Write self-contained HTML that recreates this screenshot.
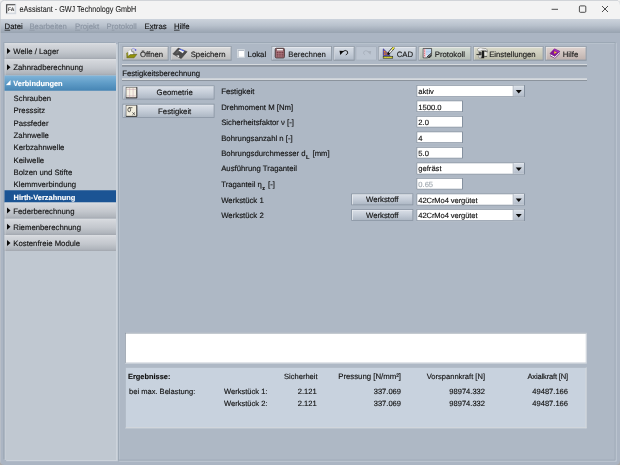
<!DOCTYPE html>
<html><head><meta charset="utf-8">
<style>
*{margin:0;padding:0;box-sizing:border-box}
html,body{width:620px;height:465px;overflow:hidden;background:linear-gradient(#f0f0f0 0,#f0f0f0 50%,#ababab 50%,#ababab 100%)}
body{font-family:"Liberation Sans",sans-serif;font-size:7.75px;color:#111;position:relative;-webkit-text-stroke:0.13px}
.abs{position:absolute}
#wrap{position:absolute;left:0;top:0;width:2480px;height:1860px;transform:scale(0.25);transform-origin:0 0}
#win{zoom:4;filter:contrast(1);text-rendering:geometricPrecision;position:absolute;left:0;top:0;width:620px;height:465px;border-radius:4.5px;overflow:hidden;background:#abb5c3}
#win:after{content:'';position:absolute;left:0;top:0;width:620px;height:465px;border-radius:4.5px;border:0.8px solid #bfc3c9;pointer-events:none}
#title{position:absolute;left:0;top:0;width:620px;height:19px;background:#f3f3f3}
#title .t{position:absolute;left:19.5px;top:4.5px;font-size:8.6px;color:#1c1c1c;white-space:nowrap;transform-origin:0 0;transform:scaleX(0.838);-webkit-text-stroke:0.08px}
#menu{position:absolute;left:0;top:19px;width:620px;height:14px;background:linear-gradient(#ccd3dc,#b9c2cd 45%,#a3adba 80%,#98a3b0 100%)}
#menu span{position:absolute;top:3.2px;white-space:nowrap;color:#111}
#menu span.dis{color:#8a94a2}
#menu u{text-decoration-thickness:0.7px;text-underline-offset:0.6px}
/* sidebar */
#side{position:absolute;left:4.6px;top:42.9px;width:111.3px;height:417px;background:#c0c8d1;box-shadow:-1.1px -0.7px 0 0 #98a4b2, 1.7px 1.2px 0 0 #ccd3db, inset 1.1px 0 0 #cad1d9}
.hd{position:absolute;left:0;width:111.3px;height:16.2px;background:linear-gradient(#dcdfe3 0,#d3d6db 12%,#c3c7cd 55%,#b0b5bc 88%,#a2a7af 100%);box-shadow:inset 0.8px 0 0 #d9dde1;color:#111}
.hd span{position:absolute;left:8.7px;top:3.7px;white-space:nowrap}
.hd i{position:absolute;left:2.5px;top:5.1px;width:0;height:0;border-left:3.6px solid #0a0a0a;border-top:3px solid transparent;border-bottom:3px solid transparent}
.hd.sel{background:linear-gradient(#7fb4d9,#5f9cc7 50%,#4685b4 100%);color:#fff;font-weight:bold;font-size:7.4px;box-shadow:none}
.it{position:absolute;left:0;width:111.3px;height:12.35px;white-space:nowrap}
.it span{position:absolute;left:9px;top:2.3px}
.it.sel{background:#1b5494;color:#fff;font-weight:bold;font-size:7.4px}
.it.sel span{top:3px}
/* main panel */
#main{position:absolute;left:118.1px;top:42.1px;width:497.4px;height:418.4px;background:#aeb8c5;border:0.75px solid #97a3b0;box-shadow:inset 0.9px 0.9px 0 #bcc5d0, 1.1px 1.1px 0 #c4ccd7}
.btn{position:absolute;height:14.3px;top:46.2px;background:linear-gradient(#dcdcdc,#cecece 50%,#bcbcbc 100%);border:0.75px solid #97a0aa;border-bottom-color:#7f8893;border-right-color:#8a939e;box-shadow:inset 0.7px 0.7px 0 #ebebeb;white-space:nowrap}
.btn.bl{background:linear-gradient(#d6dce4,#c5cdd8 50%,#b1bbc8 100%);box-shadow:inset 0.7px 0.7px 0 #e8ecf1}
.btn span{position:absolute;top:3px;color:#1a1a1a}
.sep{position:absolute;left:122.1px;width:465px;height:2.7px;background:linear-gradient(#d6dade 0,#d6dade 50%,#8b939d 50%,#8b939d 100%)}
.lb{position:absolute;left:221.2px;white-space:nowrap;line-height:9px;height:9px}
.lb sub{font-size:5.6px;font-weight:bold;vertical-align:baseline;position:relative;top:2.7px;margin:0 0.9px 0 0.4px}
.tf{position:absolute;left:416.2px;width:46.7px;height:12px;background:#fff;border:1px solid #8591a0}
.tf span{position:absolute;left:1.1px;top:0.6px;white-space:nowrap;line-height:9px;font-size:7.6px}
.cb span{position:absolute;left:1.1px;top:0.8px;white-space:nowrap;line-height:9px;font-size:7.6px}
.cb{position:absolute;left:416.2px;width:108.9px;height:12.4px;background:#fff;border:1px solid #8591a0}
.cb b{position:absolute;right:0;top:0;width:11.3px;height:10.4px;background:linear-gradient(#d9dfe7,#c6ced9 50%,#b3bcc9);border-left:0.75px solid #97a2af;box-shadow:inset 0.6px 0.6px 0 #e6eaef}
.cb b:after{content:'';position:absolute;left:2.1px;top:4.1px;border-top:3.5px solid #0c0c0c;border-left:3px solid transparent;border-right:3px solid transparent}
.sb{position:absolute;height:11.7px;background:linear-gradient(#dbe0e8,#c5cdd8 50%,#adb7c4 100%);border:0.75px solid #8893a1;box-shadow:inset 0.7px 0.7px 0 #eceff3;text-align:center;white-space:nowrap;line-height:10.4px}
.r{position:absolute;white-space:nowrap;text-align:right;font-size:7.55px}
</style></head><body>
<div id="wrap"><div id="win">
<div id="title"><span class="t">eAssistant - GWJ Technology GmbH</span>
<svg class="abs" style="left:5.5px;top:3.6px" width="11" height="11" viewBox="0 0 11 11"><rect x="0.2" y="0.2" width="10.6" height="10.6" fill="#d3d9e1"/><rect x="1.2" y="1.2" width="8.6" height="8.6" fill="#f6f6f6"/><path d="M1.2 9.8V1.2H9.8" fill="none" stroke="#3a3a3a" stroke-width="1.1"/><path d="M1.6 9.6H9.6V1.8" fill="none" stroke="#c9ced6" stroke-width="0.7"/><text x="2.5" y="7.7" font-family="Liberation Sans,sans-serif" font-size="5" font-weight="bold" fill="#3a3a3a">FA</text></svg>
<svg class="abs" style="left:545px;top:0" width="70" height="19" viewBox="0 0 70 19"><g stroke="#222" stroke-width="0.8" fill="none"><path d="M6.6 9.3h6.4"/><rect x="34.4" y="5.9" width="6.4" height="6.4" rx="1"/><path d="M57 6l6 6M63 6l-6 6"/></g></svg>
</div>
<div id="menu"><span style="left:4.6px"><u>D</u>atei</span><span class="dis" style="left:29.4px"><u>B</u>earbeiten</span><span class="dis" style="left:75px"><u>P</u>rojekt</span><span class="dis" style="left:106.6px">P<u>r</u>otokoll</span><span style="left:144.6px">E<u>x</u>tras</span><span style="left:174px"><u>H</u>ilfe</span></div>

<div id="side">
<div class="hd" style="top:0"><i></i><span>Welle / Lager</span></div>
<div class="hd" style="top:16.2px"><i></i><span>Zahnradberechnung</span></div>
<div class="hd sel" style="top:32.5px;height:15.3px"><svg class="abs" style="left:1.1px;top:4.6px" width="5" height="5.4" viewBox="0 0 44 46"><path d="M0 46L44 46L44 0Z" fill="#fff"/></svg><span>Verbindungen</span></div>
<div class="it" style="top:48.60px"><span>Schrauben</span></div>
<div class="it" style="top:60.93px"><span>Presssitz</span></div>
<div class="it" style="top:73.26px"><span>Passfeder</span></div>
<div class="it" style="top:85.59px"><span>Zahnwelle</span></div>
<div class="it" style="top:97.92px"><span>Kerbzahnwelle</span></div>
<div class="it" style="top:110.25px"><span>Keilwelle</span></div>
<div class="it" style="top:122.58px"><span>Bolzen und Stifte</span></div>
<div class="it" style="top:134.91px"><span>Klemmverbindung</span></div>
<div class="it sel" style="top:147.24px"><span>Hirth-Verzahnung</span></div>
<div class="hd" style="top:159.6px"><i></i><span style="top:4.4px">Federberechnung</span></div>
<div class="hd" style="top:175.8px"><i></i><span>Riemenberechnung</span></div>
<div class="hd" style="top:192.0px"><i></i><span>Kostenfreie Module</span></div>
</div>

<div id="main"></div>
<!-- toolbar -->
<div class="btn" style="left:122.6px;width:45.8px"><span style="left:16.6px">Öffnen</span></div>
<div class="btn" style="left:170.4px;width:61.2px"><span style="left:19.5px">Speichern</span></div>
<div class="abs" style="left:237px;top:49.4px;width:7.8px;height:8.1px;background:#fff;border:0.9px solid #c3cbd4;box-shadow:inset 0.7px 0.7px 0 #939daa"></div>
<div class="abs" style="left:247.6px;top:49.5px">Lokal</div>
<div class="btn bl" style="left:271.4px;width:60.6px"><span style="left:16.2px">Berechnen</span></div>
<div class="btn bl" style="left:333.6px;width:21px"></div>
<div class="btn bl" style="left:355.6px;width:21.2px;background:#bcc5d1;box-shadow:none;border-color:#a2acb9"></div>
<div class="btn bl" style="left:378.4px;width:38px"><span style="left:17.6px">CAD</span></div>
<div class="btn" style="left:418.4px;width:52.8px;background:linear-gradient(#d4dcd4,#c4ccc4 50%,#b4bcb4)"><span style="left:15.6px">Protokoll</span></div>
<div class="btn" style="left:473px;width:70.6px;background:linear-gradient(#dcdccc,#ccccbc 50%,#bcbcaa)"><span style="left:15.4px">Einstellungen</span></div>
<div class="btn" style="left:545px;width:41.6px;background:linear-gradient(#e0d4d0,#d0c4c0 50%,#c0b2ae)"><span style="left:17px">Hilfe</span></div>


<div class="sep" style="top:64px"></div>
<div class="abs" style="left:122.2px;top:68.6px">Festigkeitsberechnung</div>
<div class="sep" style="top:78.2px"></div>

<div class="sb" style="left:122.5px;top:85.6px;width:92px;height:14px;line-height:13.2px;padding-left:12.4px">Geometrie</div>
<div class="sb" style="left:122.5px;top:103.8px;width:92px;height:14px;line-height:13.2px;padding-left:12.4px">Festigkeit</div>

<div class="lb" style="top:87.2px">Festigkeit</div>
<div class="lb" style="top:102.6px">Drehmoment M [Nm]</div>
<div class="lb" style="top:118px">Sicherheitsfaktor ν [-]</div>
<div class="lb" style="top:133.5px">Bohrungsanzahl n [-]</div>
<div class="lb" style="top:148.8px">Bohrungsdurchmesser d<sub>L</sub> [mm]</div>
<div class="lb" style="top:164.2px">Ausführung Traganteil</div>
<div class="lb" style="top:179.9px">Traganteil η<sub>z</sub> [-]</div>
<div class="lb" style="top:196px">Werkstück 1</div>
<div class="lb" style="top:210.8px">Werkstück 2</div>

<div class="cb" style="top:84.80px"><span>aktiv</span><b></b></div>
<div class="tf" style="top:100.30px"><span style="top:1.2px">1500.0</span></div>
<div class="tf" style="top:115.80px"><span>2.0</span></div>
<div class="tf" style="top:131.30px"><span style="top:1.2px">4</span></div>
<div class="tf" style="top:146.80px"><span>5.0</span></div>
<div class="cb" style="top:162.30px"><span>gefräst</span><b></b></div>
<div class="tf" style="top:177.80px"><span style="color:#a0a8b0">0.65</span></div>
<div class="sb" style="left:351.3px;top:193.50px;width:61.9px">Werkstoff</div>
<div class="cb" style="top:193.30px"><span style="letter-spacing:-0.1px;top:1.4px">42CrMo4 vergütet</span><b></b></div>
<div class="sb" style="left:351.3px;top:209.00px;width:61.9px">Werkstoff</div>
<div class="cb" style="top:208.80px"><span style="letter-spacing:-0.1px">42CrMo4 vergütet</span><b></b></div>

<!-- bottom -->
<div class="abs" style="left:124.95px;top:332.85px;width:461.6px;height:30.3px;background:#fff;border:0.75px solid #8a95a2;border-bottom-color:#c3cad3;border-right-color:#c3cad3;box-shadow:0.5px 0.5px 0 #bcc5cf"></div>
<div class="abs" style="left:125.3px;top:367.2px;width:461.3px;height:61.1px;background:#c8d2de;border-style:solid;border-width:0.9px 1.1px 1.1px 0.9px;border-color:#adb7c3 #d3d7db #d3d7db #adb7c3"></div>
<div class="abs" style="left:128px;top:372.2px;font-weight:bold;font-size:7.4px">Ergebnisse:</div>
<div class="abs" style="left:129px;top:387.2px;font-size:7.55px">bei max. Belastung:</div>
<div class="abs" style="left:224px;top:387.2px;font-size:7.55px">Werkstück 1:</div>
<div class="abs" style="left:224px;top:399px;font-size:7.55px">Werkstück 2:</div>
<div class="r" style="left:217.6px;width:100px;top:372px">Sicherheit</div>
<div class="r" style="left:216.6px;width:100px;top:387.2px">2.121</div>
<div class="r" style="left:216.6px;width:100px;top:399px">2.121</div>
<div class="r" style="left:301px;width:100px;top:372px;font-size:7.8px">Pressung [N/mm²]</div>
<div class="r" style="left:301px;width:100px;top:387.2px">337.069</div>
<div class="r" style="left:301px;width:100px;top:399px">337.069</div>
<div class="r" style="left:385px;width:100px;top:372px">Vorspannkraft [N]</div>
<div class="r" style="left:385px;width:100px;top:387.2px">98974.332</div>
<div class="r" style="left:385px;width:100px;top:399px">98974.332</div>
<div class="r" style="left:468px;width:100px;top:372px;letter-spacing:-0.16px">Axialkraft [N]</div>
<div class="r" style="left:468px;width:100px;top:387.2px">49487.166</div>
<div class="r" style="left:468px;width:100px;top:399px">49487.166</div>
<!-- icons -->
<svg class="abs" style="left:120px;top:44px" width="30" height="19" viewBox="0 0 620 393">
<path d="M168 138L238 110L286 162L286 216L208 220L168 252Z" fill="#f6f6f6" stroke="#a8a8a8" stroke-width="7"/>
<path d="M238 112L246 162L286 164" fill="#d8d8d8" stroke="#444" stroke-width="12"/>
<path d="M286 164L286 214" stroke="#555" stroke-width="10"/>
<path d="M136 188L160 176L162 262L142 280Z" fill="#a8a820" stroke="#5e5e06" stroke-width="9"/>
<path d="M142 284L204 222L348 214L290 286Z" fill="#929208" stroke="#565600" stroke-width="11" stroke-linejoin="round"/>
<path d="M248 104Q284 72 316 112" fill="none" stroke="#8080ec" stroke-width="14"/>
<circle cx="322" cy="124" r="17" fill="#3838e0"/>
</svg>
<svg class="abs" style="left:168px;top:44px" width="30" height="19" viewBox="0 0 620 393">
<path d="M100 205L212 85L395 158L272 302Z" fill="#4c4c4c" stroke="#2c2c2c" stroke-width="10" stroke-linejoin="round"/>
<path d="M150 190L215 120L250 135L190 205Z" fill="#606060"/>
<path d="M218 136L256 98L340 132L306 190Z" fill="#f4f4f4"/>
<path d="M246 100L340 132L334 154L234 116Z" fill="#3c50dc"/>
<path d="M188 228L230 238L230 274L192 264Z" fill="#ececec"/>
<path d="M150 222L200 240L196 262L146 240Z" fill="#6e6e6e"/>
</svg>
<svg class="abs" style="left:270px;top:44px" width="30" height="19" viewBox="0 0 620 393">
<rect x="108" y="88" width="190" height="200" rx="24" fill="#8a555c" stroke="#4e3e40" stroke-width="20"/>
<rect x="128" y="148" width="152" height="126" fill="#bc868e"/>
<rect x="140" y="106" width="128" height="30" rx="6" fill="#f6f2f2"/>
<g fill="#5e2830"><rect x="138" y="160" width="24" height="24"/><rect x="176" y="160" width="24" height="24"/><rect x="214" y="160" width="24" height="24"/><rect x="252" y="160" width="24" height="24"/>
<rect x="138" y="198" width="24" height="24"/><rect x="176" y="198" width="24" height="24"/><rect x="214" y="198" width="24" height="24"/><rect x="252" y="198" width="24" height="24"/>
<rect x="138" y="236" width="24" height="24"/><rect x="176" y="236" width="24" height="24"/><rect x="214" y="236" width="24" height="24"/><rect x="252" y="236" width="24" height="24"/></g>
</svg>
<svg class="abs" style="left:334px;top:44px" width="44" height="19" viewBox="0 0 620 268">
<path d="M122 108Q160 76 190 104Q208 138 166 154" fill="none" stroke="#111" stroke-width="13"/>
<path d="M78 96L140 100L88 154Z" fill="#0a0a0a"/>
<path d="M482 106Q448 80 420 108Q404 138 438 152" fill="none" stroke="#a3abb7" stroke-width="10"/>
<path d="M524 98L466 102L514 152Z" fill="#a8b0bb"/>
</svg>
<svg class="abs" style="left:376px;top:44px" width="30" height="19" viewBox="0 0 620 393">
<path d="M150 100L150 238L292 238Z" fill="#7a4c90" stroke="#2a2a98" stroke-width="13" stroke-linejoin="round"/>
<circle cx="178" cy="158" r="17" fill="#f08c18"/><circle cx="180" cy="212" r="15" fill="#f08c18"/><circle cx="236" cy="212" r="16" fill="#f08c18"/><circle cx="208" cy="184" r="12" fill="#f08c18"/>
<path d="M256 200L358 86" stroke="#1a1a1a" stroke-width="50" stroke-linecap="round"/>
<path d="M284 170L330 118" stroke="#f6f6f6" stroke-width="28" stroke-linecap="round"/>
<path d="M340 104L362 80" stroke="#f2ee48" stroke-width="34" stroke-linecap="round"/>
<path d="M236 226L252 186L276 208Z" fill="#111"/>
<rect x="148" y="258" width="198" height="36" fill="#f0ec30" stroke="#222" stroke-width="12"/>
<path d="M180 262V280M215 262V280M250 262V280M285 262V280M320 262V280" stroke="#555" stroke-width="8"/>
</svg>
<svg class="abs" style="left:416px;top:44px" width="30" height="19" viewBox="0 0 620 393">
<path d="M148 92L322 92L322 204L236 286L148 286Z" fill="#e0ecf8" stroke="#3c3c3c" stroke-width="17" stroke-linejoin="round"/>
<rect x="160" y="102" width="40" height="174" fill="#f4c0c8"/>
<g fill="#d05060"><circle cx="176" cy="122" r="10"/><circle cx="176" cy="160" r="10"/><circle cx="176" cy="198" r="10"/><circle cx="176" cy="236" r="10"/></g>
<g stroke="#78a8dc" stroke-width="11"><path d="M204 122H312M204 152H312M204 182H312M204 212H270"/></g>
<path d="M236 290L326 204L326 246L280 290Z" fill="#333"/>
<path d="M232 262L310 196" stroke="#222" stroke-width="20" stroke-linecap="round"/>
<path d="M262 250L296 222" stroke="#bbb" stroke-width="8" stroke-linecap="round"/>
</svg>
<svg class="abs" style="left:472px;top:44px" width="30" height="19" viewBox="0 0 620 393">
<path d="M110 122Q116 80 176 84L292 96Q328 112 318 180L296 174Q300 132 268 130L206 132L162 150Q116 152 110 122Z" fill="#efefef" stroke="#5a5a5a" stroke-width="9"/>
<path d="M128 118Q150 96 200 100" stroke="#fff" stroke-width="14" fill="none"/>
<path d="M204 138L252 138L252 296L186 296L204 250Z" fill="#1c1c1c"/>
<path d="M252 150L320 150M252 256L312 256" stroke="#222" stroke-width="14"/>
<path d="M92 216L196 216" stroke="#2a2a2a" stroke-width="20"/>
<path d="M132 156L202 172L198 214L148 214Z" fill="#4a4a4a"/>
<path d="M128 238L192 230L186 292L148 292Z" fill="#dcdcdc" stroke="#5a5a5a" stroke-width="8"/>
<path d="M262 168L302 168L302 242L262 242Z" fill="#eaeaea"/>
</svg>
<svg class="abs" style="left:544px;top:44px" width="30" height="19" viewBox="0 0 620 393">
<path d="M124 200L226 256L328 152L328 200L226 302L124 248Z" fill="#5a0c6a"/>
<path d="M130 208L226 260L324 160L324 190L226 288L130 238Z" fill="#f8f8f8"/>
<path d="M122 198L215 98L328 150L225 255Z" fill="#86149a" stroke="#5a0a6a" stroke-width="8" stroke-linejoin="round"/>
<path d="M215 102L322 150L296 176L196 124Z" fill="#a434b8"/>
<path d="M208 148L268 172L216 208Z" fill="#f0d020"/>
</svg>
<svg class="abs" style="left:120px;top:83px" width="30" height="38" viewBox="0 0 367 465">
<rect x="74" y="52" width="132" height="130" fill="#f6f2e4" stroke="#555" stroke-width="7"/>
<path d="M74 182H206V52" fill="none" stroke="#222" stroke-width="9"/>
<g stroke="#b890a0" stroke-width="5"><path d="M118 55V180M160 55V180M76 78H204M76 158H204"/></g>
<rect x="74" y="274" width="132" height="134" fill="#f2eedf" stroke="#555" stroke-width="7"/>
<path d="M74 408H206V274" fill="none" stroke="#222" stroke-width="9"/>
<ellipse cx="113" cy="328" rx="17" ry="24" fill="none" stroke="#111" stroke-width="7.5"/>
<path d="M106 302H152" stroke="#111" stroke-width="7.5"/>
<path d="M152 360L184 390M184 360L152 390" stroke="#111" stroke-width="7"/>
</svg>
</div></div>
</body></html>
